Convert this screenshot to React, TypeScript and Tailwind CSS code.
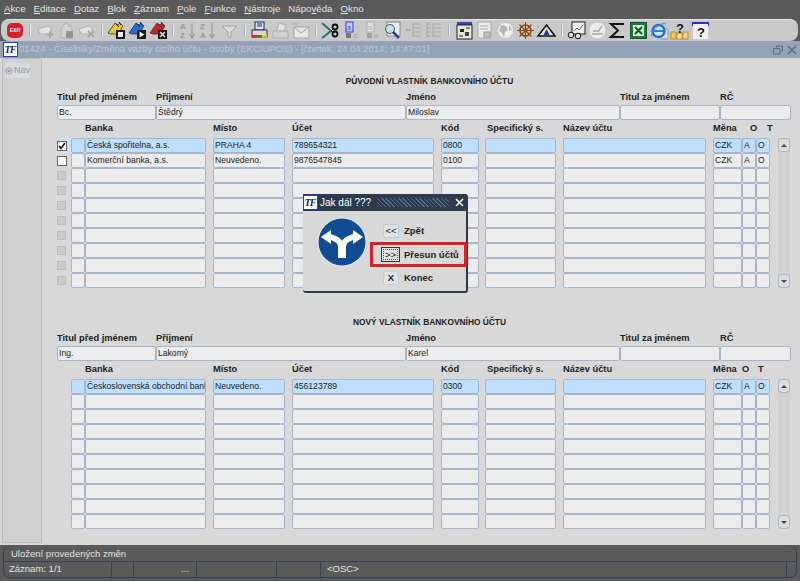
import type { ReactNode } from "react";

const menu: [string, string, string][] = [
  ["", "A", "kce"],
  ["", "E", "ditace"],
  ["", "D", "otaz"],
  ["", "B", "lok"],
  ["", "Z", "áznam"],
  ["", "P", "ole"],
  ["", "F", "unkce"],
  ["", "N", "ástroje"],
  ["Nápo", "v", "ěda"],
  ["", "O", "kno"],
];

const cols = [
  "w-[14px]",
  "w-[121px]",
  "ml-[7px] w-[72px]",
  "ml-[7px] w-[142px]",
  "ml-[7px] w-[38px]",
  "ml-[6px] w-[71px]",
  "ml-[7px] w-[143px]",
  "ml-[7px] w-[29px]",
  "w-[14px]",
  "w-[14px]",
];

function Svg({ children }: { children: ReactNode }) {
  return (
    <svg width="19" height="19" viewBox="0 0 19 19" fill="none">
      {children}
    </svg>
  );
}

const G = "#b0b0b0";

function RecordIcon({ mark }: { mark: "plus" | "house" | "x" }) {
  return (
    <Svg>
      {mark === "house" ? (
        <path d="M4 17V7l5-5 6 5v10z" fill="#d2d2d2" stroke={G} />
      ) : (
        <path d="M2 8l10-3 3 2v6H4z" fill="#e4e4e4" stroke={G} />
      )}
      {mark === "plus" && <path d="M14 10v7M10.5 13.500h7" stroke="#a8a8a8" strokeWidth="2" />}
      {mark === "house" && <rect x="9" y="10" width="7" height="7" fill="#969696" />}
      {mark === "x" && <path d="M11 10l6 6M17 10l-6 6" stroke="#a8a8a8" strokeWidth="2" />}
    </Svg>
  );
}

function BlockIcon({ color, glyph }: { color: string; glyph: "save" | "play" | "x" }) {
  return (
    <Svg>
      <path d="M1 12L8 2l3 2 2-2 3 3-2 3v5H4z" fill={color} stroke="#333" strokeWidth="0.8" />
      <path d="M9 3l3 3M12 1l2 3" stroke="#222" />
      <rect x="9" y="9" width="9" height="9" fill="#1a1a1a" />
      {glyph === "save" && <rect x="11" y="11" width="5" height="5" fill="#eee" />}
      {glyph === "play" && <path d="M11.500 10.500v6l5-3z" fill="#eee" />}
      {glyph === "x" && <path d="M11 11l5 5M16 11l-5 5" stroke="#eee" strokeWidth="1.300" />}
    </Svg>
  );
}

function SortIcon({ top, bottom }: { top: string; bottom: string }) {
  return (
    <Svg>
      <text x="1" y="8" fontSize="8" fontWeight="700" fill="#9a9a9a" fontFamily="Liberation Sans">{top}</text>
      <text x="1" y="17" fontSize="8" fontWeight="700" fill="#9a9a9a" fontFamily="Liberation Sans">{bottom}</text>
      <path d="M13 2v14M10.500 13l2.500 4 2.500-4" stroke="#9a9a9a" strokeWidth="1.200" />
    </Svg>
  );
}

function FilterIcon() {
  return (
    <Svg>
      <path d="M2 5h15l-6 6v6l-3-2v-4z" fill="#dcdcdc" stroke="#a0a0a0" />
    </Svg>
  );
}

function PrintIcon() {
  return (
    <Svg>
      <rect x="5" y="1" width="9" height="8" fill="#dfe4f4" stroke="#1b2a6b" />
      <path d="M7 3h5M7 5h5" stroke="#1b2a6b" />
      <rect x="2" y="9" width="15" height="7" fill="#d8d8d8" stroke="#333" />
      <rect x="2" y="14" width="5" height="2.500" fill="#d92020" />
      <rect x="7" y="14" width="5" height="2.500" fill="#1d8f3a" />
      <rect x="12" y="14" width="5" height="2.500" fill="#e3c21d" />
    </Svg>
  );
}

function GrayPrintIcon() {
  return (
    <Svg>
      <path d="M8 2l7 2-2 6H6z" fill="#e4e4e4" stroke={G} />
      <rect x="2" y="10" width="15" height="7" fill="#d0d0d0" stroke={G} />
    </Svg>
  );
}

function MailIcon() {
  return (
    <Svg>
      <rect x="3" y="6" width="15" height="11" fill="#e8e8e8" stroke="#a4a4a4" />
      <path d="M3 6l7 6 8-6M1 3h6" stroke="#a4a4a4" />
    </Svg>
  );
}

function CutIcon() {
  return (
    <Svg>
      <path d="M1 2l9 8M1 17l9-7" stroke="#1f6d6d" strokeWidth="1.800" />
      <circle cx="14" cy="6" r="2.500" stroke="#111" strokeWidth="1.800" />
      <circle cx="14" cy="13" r="2.500" stroke="#111" strokeWidth="1.800" />
      <path d="M10 10l3-3M10 10l3 2" stroke="#111" />
    </Svg>
  );
}

function CopyIcon({ active }: { active?: boolean }) {
  const main = active ? "#2a3fd0" : "#b0b0b0";
  const fill = active ? "#c8d0ff" : "#e0e0e0";
  return (
    <Svg>
      <rect x="4" y="1" width="7" height="10" fill={fill} stroke={main} />
      <text x="5" y="9" fontSize="7" fill={main} fontFamily="Liberation Sans">a</text>
      <rect x="4" y="12" width="5" height="5" fill="#777" opacity={active ? 1 : 0.5} />
      <text x="11" y="17" fontSize="8" fill="#a4a4a4" fontFamily="Liberation Sans">a</text>
    </Svg>
  );
}

function SearchIcon() {
  return (
    <Svg>
      <rect x="4" y="1" width="13" height="14" fill="#eee" stroke="#888" />
      <circle cx="7" cy="8" r="4.500" fill="#bde0ee" stroke="#555" />
      <path d="M10 11l6 6" stroke="#1b3fa8" strokeWidth="2.500" />
    </Svg>
  );
}

function ListIcon({ double }: { double?: boolean }) {
  return (
    <Svg>
      <path d="M9 3h8M9 7h8M9 11h8M9 15h8M9 2v14" stroke="#a4a4a4" />
      {double ? (
        <path d="M3 3h4M3 7h4M3 11h4M3 15h4M3 2v14" stroke="#a4a4a4" />
      ) : (
        <path d="M2 9h5" stroke="#a4a4a4" strokeWidth="1.500" />
      )}
    </Svg>
  );
}

function FormIcon() {
  return (
    <Svg>
      <rect x="2" y="1" width="15" height="4" fill="#3a44b8" />
      <rect x="2" y="4" width="15" height="14" fill="#e8e8d8" stroke="#222" />
      <rect x="5" y="8" width="4" height="3" fill="#222" />
      <rect x="10" y="11" width="4" height="4" fill="#444" />
      <path d="M4 15h4M11 7h4" stroke="#222" />
    </Svg>
  );
}

function PageIcon() {
  return (
    <Svg>
      <rect x="3" y="1" width="13" height="16" rx="1" fill="#ececec" stroke="#aaa" />
      <path d="M5 5h8M5 8h8" stroke="#aaa" />
      <rect x="9" y="11" width="6" height="5" fill="#c4c4c4" stroke="#999" />
    </Svg>
  );
}

function GlobeIcon() {
  return (
    <Svg>
      <circle cx="9.500" cy="9.500" r="8" fill="#f0f0f0" stroke="#c4c4c4" />
      <path d="M5 4l5 1 2 4-3 2-1 5-2-4-3-2zM13 4l3 5-3 1z" fill="#b6b6b6" />
    </Svg>
  );
}

function WheelIcon() {
  return (
    <Svg>
      <circle cx="9.500" cy="9.500" r="5.500" stroke="#8a4a10" strokeWidth="1.600" />
      <circle cx="9.500" cy="9.500" r="1.800" fill="#c88a20" />
      <path d="M9.500 1v17M1 9.500h17M3.500 3.500l12 12M15.500 3.500l-12 12" stroke="#8a4a10" strokeWidth="1.200" />
    </Svg>
  );
}

function TentIcon() {
  return (
    <Svg>
      <path d="M1 15L9.500 4 18 15z" fill="#e8e8c8" stroke="#111" strokeWidth="1.500" />
      <path d="M6.500 14l3-6 3 6z" fill="#1d34c8" />
      <path d="M2 6l3 2M17 6l-3 2" stroke="#e8d83a" />
    </Svg>
  );
}

function ChartIcon() {
  return (
    <Svg>
      <rect x="5" y="1" width="13" height="12" fill="#eee" stroke="#222" />
      <path d="M7 10l3-3 2 2 4-5" stroke="#666" />
      <circle cx="4" cy="14" r="2.800" fill="#ddd" stroke="#111" />
      <circle cx="11" cy="15" r="2.800" fill="#ddd" stroke="#111" />
    </Svg>
  );
}

function GrayDiscIcon() {
  return (
    <Svg>
      <circle cx="9.500" cy="9.500" r="8.500" fill="#ececec" stroke="#c6c6c6" />
      <path d="M4 13h11M5 10h5M14 5l-4 6" stroke="#a8a8a8" strokeWidth="1.400" />
    </Svg>
  );
}

function SigmaIcon() {
  return (
    <Svg>
      <path d="M16 3H3l7 6.500L3 16h13" stroke="#111" strokeWidth="2" />
    </Svg>
  );
}

function ExcelIcon() {
  return (
    <Svg>
      <rect x="1.500" y="1.500" width="16" height="16" fill="#1f7a3a" stroke="#155028" />
      <rect x="4" y="4" width="11" height="11" fill="#cfe8d0" />
      <path d="M6 6l7 7M13 6l-7 7" stroke="#115f2b" strokeWidth="2" />
    </Svg>
  );
}

function IeIcon() {
  return (
    <Svg>
      <rect x="11" y="8" width="7" height="10" fill="#ddd" stroke="#999" />
      <circle cx="8.500" cy="10" r="6" fill="#cfe6fb" stroke="#1f6fd0" strokeWidth="2.400" />
      <path d="M3 10h11" stroke="#1f6fd0" strokeWidth="1.800" />
      <path d="M1 15C4 6 12 1 16 3" stroke="#3f8fe0" />
    </Svg>
  );
}

function HelpIcon() {
  return (
    <Svg>
      <rect x="1" y="11" width="5" height="7" fill="#f2c66a" stroke="#c88a20" />
      <rect x="13" y="11" width="5" height="7" fill="#f2d68a" stroke="#c88a20" />
      <rect x="7" y="12" width="5" height="6" fill="#f6e4a8" stroke="#c88a20" />
      <text x="6" y="12" fontSize="13" fontWeight="700" fill="#111" fontFamily="Liberation Sans">?</text>
    </Svg>
  );
}

function WhatsThisIcon() {
  return (
    <Svg>
      <rect x="1" y="1" width="17" height="4" fill="#2a2fd0" />
      <rect x="2" y="3" width="15" height="15" fill="#f0f0f0" />
      <text x="6" y="16" fontSize="13" fontWeight="700" fill="#111" fontFamily="Liberation Sans">?</text>
    </Svg>
  );
}

function ExitIcon() {
  return (
    <div className="flex h-[15px] w-[16px] items-center justify-center rounded-[5px] bg-[#d81e2a] text-[5px] font-bold leading-none text-white">
      EXIT
    </div>
  );
}

const Sep = () => (
  <div className="flex w-[9.6px] shrink-0 justify-center">
    <div className="h-[11px] w-[2px] border-l border-[#9db0cc] bg-[#e8eef6]" />
  </div>
);

const Tool = ({ children }: { children: ReactNode }) => (
  <div className="flex w-[20.6px] shrink-0 justify-center">{children}</div>
);

function Logo() {
  return (
    <div className="flex h-[15px] w-[15px] shrink-0 items-center justify-center overflow-hidden border border-[#2438d8] bg-white pr-[1px] font-['Liberation_Serif',serif] text-[10px] font-bold italic leading-none tracking-[-1px] text-[#10206a]">
      TF
    </div>
  );
}

function Toolbar() {
  return (
    <div className="mr-[2px] ml-[1px] flex h-[22px] items-center rounded-[8px] border-t border-[#e4e4e4] bg-[#c9c9c9] pl-[4px]">
      <Tool><ExitIcon /></Tool>
      <Sep />
      <Tool><RecordIcon mark="plus" /></Tool>
      <Tool><RecordIcon mark="house" /></Tool>
      <Tool><RecordIcon mark="x" /></Tool>
      <Sep />
      <Tool><BlockIcon color="#f3c81e" glyph="save" /></Tool>
      <Tool><BlockIcon color="#1d6fe0" glyph="play" /></Tool>
      <Tool><BlockIcon color="#d42020" glyph="x" /></Tool>
      <Sep />
      <Tool><SortIcon top="A" bottom="Z" /></Tool>
      <Tool><SortIcon top="Z" bottom="A" /></Tool>
      <Tool><FilterIcon /></Tool>
      <Sep />
      <Tool><PrintIcon /></Tool>
      <Tool><GrayPrintIcon /></Tool>
      <Tool><MailIcon /></Tool>
      <Sep />
      <Tool><CutIcon /></Tool>
      <Tool><CopyIcon active /></Tool>
      <Tool><CopyIcon /></Tool>
      <Tool><SearchIcon /></Tool>
      <Tool><ListIcon /></Tool>
      <Tool><ListIcon double /></Tool>
      <Sep />
      <Tool><FormIcon /></Tool>
      <Tool><PageIcon /></Tool>
      <Tool><GlobeIcon /></Tool>
      <Tool><WheelIcon /></Tool>
      <Tool><TentIcon /></Tool>
      <Sep />
      <Tool><ChartIcon /></Tool>
      <Tool><GrayDiscIcon /></Tool>
      <Tool><SigmaIcon /></Tool>
      <Tool><ExcelIcon /></Tool>
      <Tool><IeIcon /></Tool>
      <Tool><HelpIcon /></Tool>
      <Tool><WhatsThisIcon /></Tool>
    </div>
  );
}

function Field({ value, selected, className }: { value?: string; selected?: boolean; className?: string }) {
  return (
    <div className={`h-[15px] overflow-hidden whitespace-nowrap rounded-[2px] border border-[#a5b5cb] pl-[1px] text-[8.6px] leading-[13px] text-[#222] ${selected ? "bg-[#bfdfff]" : "bg-[#ececec]"} ${className ?? ""}`}>
      {value}
    </div>
  );
}

function Person({ title, surname, name }: { title: string; surname: string; name: string }) {
  return (
    <div>
      <div className="flex h-[12px] items-center text-[9.3px] font-bold leading-none text-[#222]">
        <div className="w-[99px]">Titul před jménem</div>
        <div className="w-[250px]">Příjmení</div>
        <div className="w-[214px]">Jméno</div>
        <div className="w-[100px]">Titul za jménem</div>
        <div>RČ</div>
      </div>
      <div className="mt-[1px] grid grid-cols-[99px_250px_214px_100px_71px]">
        <Field value={title} />
        <Field value={surname} />
        <Field value={name} />
        <Field />
        <Field />
      </div>
    </div>
  );
}

function Checkbox({ state }: { state: "checked" | "empty" | "off" }) {
  if (state === "off") {
    return <div className="mt-[3px] h-[9px] w-[9px] border border-[#bcbcbc] bg-[#cbcbcb]" />;
  }
  return (
    <div className="mt-[3px] flex h-[10px] w-[10px] items-center justify-center border border-[#666] bg-white">
      {state === "checked" && (
        <svg width="8" height="8" viewBox="0 0 8 8" fill="none">
          <path d="M1 4l2 2.500L7 1" stroke="#111" strokeWidth="1.600" />
        </svg>
      )}
    </div>
  );
}

function ScrollButton({ down }: { down?: boolean }) {
  return (
    <div className="flex h-[14px] w-[12px] items-center justify-center rounded-[4px] border border-[#a5b5cb] bg-[#dcdcdc]">
      <div className={down
        ? "border-x-[3px] border-t-[3px] border-x-transparent border-t-[#445]"
        : "border-x-[3px] border-b-[3px] border-x-transparent border-b-[#445]"} />
    </div>
  );
}

type TableRow = { cells: string[]; selected?: boolean; check?: "checked" | "empty" };

function Table({ rows, showChecks }: { rows: TableRow[]; showChecks?: boolean }) {
  const all: TableRow[] = [...rows];
  while (all.length < 10) all.push({ cells: [] });
  return (
    <div className="flex">
      <div>
        {all.map((row, i) => (
          <div key={i} className="flex h-[15px]">
            <div className={`w-[14px] shrink-0 ${showChecks && row.selected ? "bg-[#c9e2f8]" : ""}`}>
              {showChecks && <Checkbox state={row.check ?? "off"} />}
            </div>
            {cols.map((col, c) => (
              <Field
                key={c}
                value={row.cells[c]}
                selected={row.selected}
                className={`${col} shrink-0`}
              />
            ))}
          </div>
        ))}
      </div>
      <div className="ml-[8px] flex w-[12px] flex-col justify-between bg-[#d0d0d0]">
        <ScrollButton />
        <ScrollButton down />
      </div>
    </div>
  );
}

function TableHead({ o, t }: { o: string; t: string }) {
  return (
    <div className="flex h-[12px] items-center text-[9.3px] font-bold leading-none text-[#222]">
      <div className="ml-[28px] w-[128px]">Banka</div>
      <div className="w-[79px]">Místo</div>
      <div className="w-[149px]">Účet</div>
      <div className="w-[46px]">Kód</div>
      <div className="w-[76px]">Specifický s.</div>
      <div className="w-[150px]">Název účtu</div>
      <div className={o}>Měna</div>
      <div className={t}>O</div>
      <div>T</div>
    </div>
  );
}

function Dialog() {
  return (
    <div className="absolute top-[194px] left-[303px] h-[99px] w-[165px] rounded-[3px] border-r-2 border-b-2 border-[#2c3a4e] bg-[#d8d8d8]">
      <div className="flex h-[17px] items-center bg-[#2c3a4e] text-[10px] text-white">
        <Logo />
        <span className="ml-[2px] w-[57px] shrink-0 whitespace-nowrap">Jak dál ???</span>
        <div className="h-[9px] w-[72px] shrink-0 bg-[repeating-linear-gradient(45deg,#5d6b80_0,#5d6b80_1px,transparent_1px,transparent_3px)]" />
        <svg className="ml-[6px] shrink-0" width="9" height="9" viewBox="0 0 9 9" fill="none">
          <path d="M1 1l7 7M8 1L1 8" stroke="#fff" strokeWidth="1.500" />
        </svg>
      </div>
      <div className="flex">
        <svg className="mt-[6px] ml-[14px]" width="50" height="50" viewBox="0 0 50 50">
          <circle cx="25" cy="25" r="24.500" fill="#e8e8e8" />
          <circle cx="25" cy="25" r="23.500" fill="#0f4c92" />
          <path d="M21 41V30c0-3-2-5-5-6l-2-1v4L4 20l10-7v4l5 2c3 1 5 3 6 5 1-2 3-4 6-5l5-2v-4l10 7-10 7v-4l-2 1c-3 1-5 3-5 6v11z" fill="#fff" />
        </svg>
        <div className="mt-[13px] ml-[16px] flex flex-col text-[9.500px] font-bold leading-none text-[#222]">
          <div className="flex h-[14px] items-center">
            <div className="mr-[5px] flex h-[14px] w-[16px] items-center justify-center rounded-[2px] border border-[#c4ccd8] bg-[#e2e2e2] font-normal">&lt;&lt;</div>
            Zpět
          </div>
          <div className="-ml-[2px] mt-[9px] flex h-[15px] items-center">
            <div className="mr-[4px] flex h-[15px] w-[19px] items-center justify-center border border-[#333] bg-[#e2e2e2] font-normal">
              <span className="border border-dotted border-[#555] px-[1px] leading-[9px]">&gt;&gt;</span>
            </div>
            Přesun účtů
          </div>
          <div className="mt-[9px] flex h-[14px] items-center">
            <div className="mr-[5px] flex h-[14px] w-[16px] items-center justify-center rounded-[2px] border border-[#c4ccd8] bg-[#e2e2e2]">X</div>
            Konec
          </div>
        </div>
      </div>
      <div className="absolute top-[48px] left-[67px] h-[25px] w-[97px] border-[3px] border-[#dc1f26]" />
    </div>
  );
}

function StatusBar() {
  const sep = "border-r border-[#33415a] h-full";
  return (
    <div className="mx-[3px] mb-[3px] mt-[1px] flex h-[32px] flex-col rounded-[7px] border border-t-0 border-[#33404f] text-[9.500px] text-[#e2e2e2]">
      <div className="flex h-[16px] items-center border-b border-[#33415a] pl-[7px] pt-[1px]">Uložení provedených změn</div>
      <div className="flex h-[16px] items-center">
        <div className={`w-[108px] pl-[5px] ${sep}`}>Záznam: 1/1</div>
        <div className={`w-[22px] ${sep}`} />
        <div className={`w-[63px] pr-[7px] text-right ${sep}`}>...</div>
        <div className={`w-[80px] ${sep}`} />
        <div className={`w-[44px] ${sep}`} />
        <div className={`w-[466px] pl-[6px] ${sep}`}>&lt;OSC&gt;</div>
      </div>
    </div>
  );
}

export default function App() {
  const top: TableRow[] = [
    { cells: ["", "Česká spořitelna, a.s.", "PRAHA 4", "789654321", "0800", "", "", "CZK", "A", "O"], selected: true, check: "checked" },
    { cells: ["", "Komerční banka, a.s.", "Neuvedeno.", "9876547845", "0100", "", "", "CZK", "A", "O"], check: "empty" },
  ];
  const bottom: TableRow[] = [
    { cells: ["", "Československá obchodní banka", "Neuvedeno.", "456123789", "0300", "", "", "CZK", "A", "O"], selected: true },
  ];

  return (
    <div className="relative flex h-[581px] w-[800px] flex-col overflow-hidden bg-[#5a5a5a] font-['Liberation_Sans',sans-serif]">
      <div className="flex h-[19px] shrink-0 items-center gap-[8px] pl-[4px] text-[9.700px] text-[#e4e4e4]">
        {menu.map(([before, key, after]) => (
          <span key={before + key + after}>
            {before}
            <span className="underline">{key}</span>
            {after}
          </span>
        ))}
      </div>
      <Toolbar />
      <div className="flex h-[504px] shrink-0 flex-col bg-[#d8d8d8]">
        <div className="flex h-[17px] shrink-0 items-center bg-[#95a3b8] pl-[3px] text-[9.500px] text-[#bcc7d6]">
          <Logo />
          <span className="ml-[1px]">01424 - Číselníky/Změna vazby cizího účtu - osoby (EKCIUPOS) - [čtvrtek, 24.04.2014; 14:47:01]</span>
          <div className="ml-auto flex items-center gap-[4px] pr-[3px]">
            <svg width="10" height="10" viewBox="0 0 10 10" fill="none">
              <path d="M3.500 2.500V1h6v5H8M.5 3.500h6.500v5.500H.5z" stroke="#5f6d80" />
            </svg>
            <svg width="10" height="10" viewBox="0 0 10 10" fill="none">
              <path d="M1 1l8 8M9 1L1 9" stroke="#5f6d80" strokeWidth="1.500" />
            </svg>
          </div>
        </div>
        <div className="flex min-h-0 flex-1">
          <div className="mb-[2px] ml-[2px] w-[40px] shrink-0 rounded-t-[2px] border border-[#bcbcbc] bg-[#d0d0d0] pt-[4px] pl-[2px]">
            <div className="flex h-[15px] w-[25px] items-center gap-[1px] bg-[#dcdcdc] text-[9px] text-[#8d9bb0]">
              <svg width="8" height="8" viewBox="0 0 8 8" fill="none">
                <circle cx="4" cy="4" r="3.200" stroke="#8d9bb0" />
                <circle cx="4" cy="4" r="1.600" fill="#8d9bb0" />
              </svg>
              Nav
            </div>
          </div>
          <div className="min-w-0 flex-1 pl-[15px]">
            <div className="mt-[17px] pl-[2px] text-center text-[8.400px] font-bold leading-[12px] text-[#222]">PŮVODNÍ VLASTNÍK BANKOVNÍHO ÚČTU</div>
            <div className="mt-[5px]"><Person title="Bc." surname="Štědrý" name="Miloslav" /></div>
            <div className="mt-[3px]"><TableHead o="w-[37px]" t="w-[17px]" /></div>
            <div className="mt-[3px]"><Table rows={top} showChecks /></div>
            <div className="mt-[28px] pl-[2px] text-center text-[8.400px] font-bold leading-[12px] text-[#222]">NOVÝ VLASTNÍK BANKOVNÍHO ÚČTU</div>
            <div className="mt-[5px]"><Person title="Ing." surname="Lakomý" name="Karel" /></div>
            <div className="mt-[3px]"><TableHead o="w-[29px]" t="w-[16px]" /></div>
            <div className="mt-[3px]"><Table rows={bottom} /></div>
          </div>
        </div>
      </div>
      <StatusBar />
      <Dialog />
    </div>
  );
}
